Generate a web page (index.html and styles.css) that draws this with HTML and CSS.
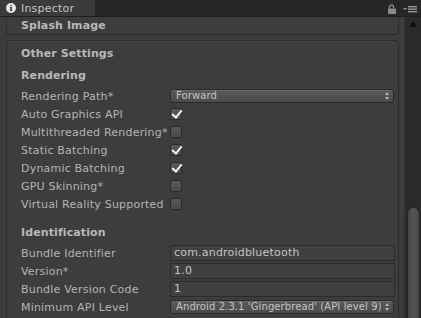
FILE: index.html
```html
<!DOCTYPE html>
<html lang="en">
<head>
  <meta charset="UTF-8" />
  <title>Inspector</title>
  <link rel="stylesheet" href="styles.css">
</head>
<body>

  <div class="window">
    <!-- Tab bar -->
    <div class="tabbar">
      <div class="tab">
        <span class="info-icon">i</span>
        <span class="tab-label">Inspector</span>
      </div>
      <div class="tab-tools">
        <svg class="lock" width="9" height="10" viewBox="0 0 9 10">
          <path d="M1.5 5 V3 A2 2 0 0 1 5.5 3 V4" fill="none" stroke="#8a8a8a" stroke-width="1.3"/>
          <rect x="0" y="4.5" width="8" height="5.5" rx="0.5" fill="#8a8a8a"/>
        </svg>
        <svg class="menu" width="14" height="7" viewBox="0 0 14 7">
          <path d="M0 2 H4 L2 4 Z" fill="#9a9a9a"/>
          <rect x="5" y="0" width="9" height="1.4" fill="#9a9a9a"/>
          <rect x="5" y="2.5" width="9" height="1.4" fill="#9a9a9a"/>
          <rect x="5" y="5" width="9" height="1.4" fill="#9a9a9a"/>
        </svg>
      </div>
    </div>

    <div class="body">
      <div class="content">
        <!-- Collapsed section -->
        <div class="section section-top">
          <div class="section-title">Splash Image</div>
        </div>

        <!-- Other Settings -->
        <div class="section section-open">
          <div class="section-title">Other Settings</div>

          <div class="group-title">Rendering</div>
          <div class="row">
            <span class="label">Rendering Path*</span>
            <div class="popup"><span class="popup-text">Forward</span><span class="popup-arrows"></span></div>
          </div>
          <div class="row">
            <span class="label">Auto Graphics API</span>
            <span class="check checked"></span>
          </div>
          <div class="row">
            <span class="label">Multithreaded Rendering*</span>
            <span class="check"></span>
          </div>
          <div class="row">
            <span class="label">Static Batching</span>
            <span class="check checked"></span>
          </div>
          <div class="row">
            <span class="label">Dynamic Batching</span>
            <span class="check checked"></span>
          </div>
          <div class="row">
            <span class="label">GPU Skinning*</span>
            <span class="check"></span>
          </div>
          <div class="row">
            <span class="label">Virtual Reality Supported</span>
            <span class="check"></span>
          </div>

          <div class="group-title group-gap">Identification</div>
          <div class="row">
            <span class="label">Bundle Identifier</span>
            <div class="field">com.androidbluetooth</div>
          </div>
          <div class="row">
            <span class="label">Version*</span>
            <div class="field">1.0</div>
          </div>
          <div class="row">
            <span class="label">Bundle Version Code</span>
            <div class="field">1</div>
          </div>
          <div class="row">
            <span class="label">Minimum API Level</span>
            <div class="popup"><span class="popup-text">Android 2.3.1 'Gingerbread' (API level 9)</span><span class="popup-arrows"></span></div>
          </div>
        </div>
      </div>

      <!-- Scrollbar -->
      <div class="scrollbar">
        <div class="scroll-up"></div>
        <div class="scroll-track">
          <div class="scroll-thumb"></div>
        </div>
      </div>
    </div>
  </div>

</body>
</html>
```

FILE: styles.css
```css
body {
  margin: 0;
  padding: 0;
  background: #3c3c3c;
  font-family: 'DejaVu Sans', Verdana, sans-serif;
  font-size: 11px;
  color: #b4b4b4;
}

.window {
  width: 421px;
  height: 318px;
  overflow: hidden;
  display: flex;
  flex-direction: column;
}

/* Tab bar */
.tabbar {
  height: 16px;
  background: #272727;
  border-bottom: 1px solid #1f1f1f;
  display: flex;
  justify-content: space-between;
  align-items: flex-end;
  flex-shrink: 0;
}

.tab {
  width: 95px;
  height: 16px;
  background: #3a3a3a;
  display: flex;
  align-items: center;
  box-sizing: border-box;
  padding-left: 6px;
  border-top-right-radius: 2px;
}

.info-icon {
  width: 10px;
  height: 10px;
  border-radius: 50%;
  background: #e6e6e6;
  color: #2a2a2a;
  font-size: 8px;
  font-weight: bold;
  line-height: 10px;
  text-align: center;
  font-family: 'DejaVu Serif', serif;
}

.tab-label {
  margin-left: 5px;
  color: #c4c4c4;
  font-size: 11px;
  letter-spacing: 0.2px;
}

.tab-tools {
  display: flex;
  align-items: center;
  gap: 6px;
  height: 16px;
  padding-right: 4px;
}

.lock {
  margin-top: 1px;
}

.menu {
  margin-top: 3px;
}

/* Body */
.body {
  flex: 1;
  display: flex;
  min-height: 0;
}

.content {
  flex: 1;
  padding-left: 6px;
  padding-right: 4px;
  border-right: 1px solid #323232;
  box-shadow: inset -1px 0 0 #434343;
  overflow: hidden;
}

.section {
  border: 1px solid #2c2c2c;
  border-radius: 4px;
  background: #3d3d3d;
  box-shadow: inset 0 1px 0 #444;
}

.section-top {
  border-top: none;
  border-top-left-radius: 0;
  border-top-right-radius: 0;
  height: 17px;
  box-shadow: none;
}

.section-top .section-title {
  line-height: 17px;
}

.section-open {
  margin-top: 5px;
  border-bottom: none;
  padding-bottom: 20px;
}

.section-title {
  font-weight: bold;
  color: #b8b8b8;
  padding-left: 14px;
  height: 18px;
  line-height: 16px;
  letter-spacing: 0.1px;
}

.section-open .section-title {
  line-height: 25px;
  height: 24px;
}

.group-title {
  font-weight: bold;
  color: #b8b8b8;
  padding-left: 14px;
  height: 20px;
  line-height: 18px;
  margin-top: 2px;
  letter-spacing: 0.1px;
}

.group-gap {
  margin-top: 11px;
  height: 20px;
}

.row {
  display: flex;
  align-items: center;
  height: 18px;
  padding-left: 14px;
}

.label {
  width: 149px;
  flex-shrink: 0;
  white-space: nowrap;
  color: #b4b4b4;
  letter-spacing: 0.2px;
}

.popup {
  width: 224px;
  height: 14px;
  box-sizing: border-box;
  border: 1px solid #2a2a2a;
  border-radius: 3px;
  background: linear-gradient(#5a5a5a, #4a4a4a);
  box-shadow: inset 0 1px 0 #6a6a6a;
  color: #c4c4c4;
  font-size: 10px;
  line-height: 12px;
  padding-left: 5px;
  padding-right: 4px;
  display: flex;
  justify-content: space-between;
  align-items: center;
  white-space: nowrap;
}

.popup-text {
  overflow: hidden;
  letter-spacing: 0.1px;
}

.popup-arrows {
  width: 5px;
  height: 8px;
  margin-left: 3px;
  flex-shrink: 0;
  display: flex;
  flex-direction: column;
  justify-content: space-between;
  align-items: center;
}

.popup-arrows::before,
.popup-arrows::after {
  content: "";
  width: 0;
  height: 0;
  border-left: 2.5px solid transparent;
  border-right: 2.5px solid transparent;
}

.popup-arrows::before {
  border-bottom: 3px solid #b8b8b8;
}

.popup-arrows::after {
  border-top: 3px solid #b8b8b8;
}

.check {
  width: 12px;
  height: 12px;
  box-sizing: border-box;
  border: 1px solid #2a2a2a;
  border-radius: 2px;
  background: linear-gradient(#575757, #4a4a4a);
  position: relative;
}

.checked::after {
  content: "";
  position: absolute;
  left: 3px;
  top: -1px;
  width: 4px;
  height: 8px;
  border-right: 2px solid #f0f0f0;
  border-bottom: 2px solid #f0f0f0;
  transform: rotate(40deg);
}

.field {
  width: 225px;
  height: 16px;
  box-sizing: border-box;
  border: 1px solid #2b2b2b;
  background: #404040;
  color: #c4c4c4;
  line-height: 14px;
  padding-left: 3px;
  font-size: 11px;
  letter-spacing: 0.2px;
}

/* Scrollbar */
.scrollbar {
  width: 16px;
  background: #2a2a2a;
  border-left: 1px solid #383838;
  display: flex;
  flex-direction: column;
  align-items: center;
  flex-shrink: 0;
}

.scroll-up {
  width: 0;
  height: 0;
  margin-top: 4px;
  border-left: 4px solid transparent;
  border-right: 4px solid transparent;
  border-bottom: 6px solid #0e0e0e;
}

.scroll-track {
  flex: 1;
  width: 100%;
  display: flex;
  justify-content: center;
}

.scroll-thumb {
  width: 11px;
  margin-top: 180px;
  border-radius: 6px 6px 0 0;
  background: linear-gradient(to right, #464646, #555, #464646);
  border: 1px solid #242424;
  border-bottom: none;
}
```
